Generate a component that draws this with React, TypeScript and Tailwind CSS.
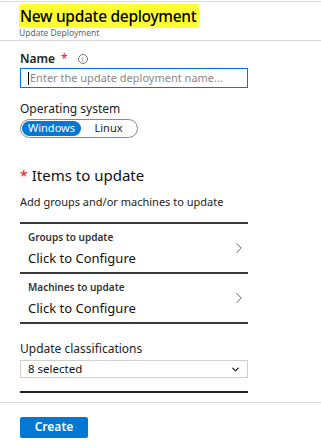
import { ChevronRight, ChevronDown } from "lucide-react";

const font = { fontFamily: '"Noto Sans", "Open Sans", sans-serif' };

function ConfigRow({ title }: { title: string }) {
  return (
    <div className="flex h-[50px] items-center justify-between border-b-2 border-[#3a3a3a] pl-[8px]">
      <div className="flex flex-col">
        <span className="text-[10px] font-semibold leading-[14px] text-[#333]">{title}</span>
        <span className="mt-[6px] text-[13px] leading-[16px] text-[#111]">Click to Configure</span>
      </div>
      <ChevronRight size={18} strokeWidth={1.1} className="text-[#444]" />
    </div>
  );
}

export default function App() {
  return (
    <div className="h-[448px] w-[321px] overflow-hidden bg-white text-[#222]" style={font}>
      <div className="mt-[1px] h-[1px] bg-[#dcdcdc]" />

      {/* header */}
      <div className="flex h-[38px] flex-col items-start px-[19px] pt-[2px]">
        <h1 className="whitespace-nowrap rounded-[3px] bg-[#ffff33] pl-[1px] pr-[3px] text-[15.5px] font-medium leading-[24px] tracking-[-0.3px] text-black">
          New update deployment
        </h1>
        <span className="whitespace-nowrap text-[8.5px] leading-[10px] text-[#666]">Update Deployment</span>
      </div>
      <div className="h-[1px] bg-[#d6d6d6]" />

      <div className="flex flex-col px-[20px] pt-[11px]">
        {/* name */}
        <div className="flex h-[14px] items-center gap-[6px]">
          <span className="text-[12px] font-semibold text-[#222]">Name</span>
          <span className="text-[12px] text-[#e81123]">*</span>
          <span className="ml-[4px] flex h-[10px] w-[10px] items-center justify-center rounded-full border border-[#777] text-[7px] leading-none text-[#777]">
            i
          </span>
        </div>
        <div className="mt-[2px] flex h-[20px] w-[228px] items-center border border-[#0078d4] pl-[7px]">
          <span className="mr-[1px] h-[13px] w-[1px] bg-black" />
          <span className="text-[11px] text-[#888]">Enter the update deployment name...</span>
        </div>

        {/* os */}
        <span className="mt-[13px] text-[12px] leading-[16px] text-[#222]">Operating system</span>
        <div className="mt-[2px] flex h-[19px] w-[118px] items-center rounded-full border border-[#8a8a8a] p-[1px]">
          <span className="flex h-full w-[59px] items-center justify-center rounded-full bg-[#0078d4] text-[11px] text-white">
            Windows
          </span>
          <span className="flex-1 text-center text-[11px] text-[#222]">Linux</span>
        </div>

        {/* items to update */}
        <div className="mt-[27px] flex items-baseline gap-[4px]">
          <span className="text-[14px] text-[#e81123]">*</span>
          <span className="text-[15px] leading-[20px] text-[#111]">Items to update</span>
        </div>
        <span className="mt-[9px] text-[11px] leading-[14px] text-[#222]">Add groups and/or machines to update</span>

        <div className="mt-[13px] flex w-[228px] flex-col border-t-2 border-[#3a3a3a]">
          <ConfigRow title="Groups to update" />
          <ConfigRow title="Machines to update" />
        </div>

        {/* classifications */}
        <span className="mt-[17px] text-[12px] leading-[16px] text-[#222]">Update classifications</span>
        <div className="mt-[3px] flex h-[18px] w-[228px] items-center justify-between border border-[#cfcfcf] pl-[7px] pr-[6px]">
          <span className="text-[11.5px] text-[#111]">8 selected</span>
          <ChevronDown size={11} strokeWidth={3} className="text-[#222]" />
        </div>
        <div className="mt-[13px] h-[2px] w-[228px] bg-[#222]" />
      </div>

      <div className="mt-[9px] h-[1px] bg-[#d6d6d6]" />
      <div className="px-[20px] pt-[10px]">
        <button className="h-[21px] w-[68px] rounded-[2px] bg-[#0078d4] text-[12px] font-semibold text-white">
          Create
        </button>
      </div>
    </div>
  );
}
